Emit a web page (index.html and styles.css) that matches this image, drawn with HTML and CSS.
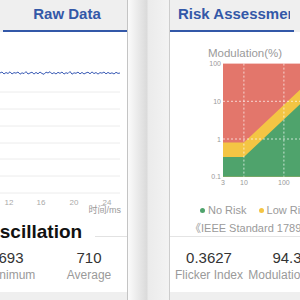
FILE: index.html
```html
<!DOCTYPE html>
<html lang="en">
<head>
  <meta charset="UTF-8" />
  <meta name="viewport" content="width=device-width, initial-scale=1.0" />
  <title>Flicker Report</title>
  <link rel="stylesheet" href="styles.css">
</head>
<body>
  <div class="deck">

    <!-- raw data card -->
    <section class="card card-wave">
      <nav class="tabs">
        <div class="tab"><span>Flicker Waveform</span></div>
        <div class="tab active"><span>Raw Data</span></div>
      </nav>

      <svg class="wave-chart" width="248" height="188" viewBox="0 0 248 188">
        <g class="grid">
          <line x1="30" y1="60" x2="241" y2="60" />
          <line x1="30" y1="77" x2="241" y2="77" />
          <line x1="30" y1="94" x2="241" y2="94" />
          <line x1="30" y1="111" x2="241" y2="111" />
          <line x1="30" y1="127" x2="241" y2="127" />
          <line x1="30" y1="144" x2="241" y2="144" />
          <line x1="30" y1="161" x2="241" y2="161" />
        </g>
        <polyline class="wave" points="30,41 121,41 123,40 125,42 127,40.5 129,41.5 131,39.8 133,42 135,40.6 137,41.2 139,40 141,42.2 143,40.8 145,41.6 147,39.6 149,42 151,41 153,40.2 155,42.1 157,40.4 159,41.8 161,40 163,41.5 165,42.3 167,40.1 169,41 171,39.7 173,41.9 175,40.6 177,42 179,40.3 181,41.4 183,40 185,42.1 187,40.7 189,41.5 191,39.5 193,42.2 195,40.8 197,41.3 199,40.1 201,41.9 203,40.4 205,42 207,40.9 209,40.2 211,41.8 213,39.9 215,41.6 217,40.5 219,42.1 221,40.6 223,41.2 225,40 227,41.9 229,40.4 231,41.6 233,40.8 235,42 237,40.3 239,41.4 241,41" />
        <g class="ticks">
          <text x="33" y="172.5">0</text>
          <text x="65" y="172.5">4</text>
          <text x="98" y="172.5">8</text>
          <text x="130" y="172.5">12</text>
          <text x="162" y="172.5">16</text>
          <text x="195" y="172.5">20</text>
          <text x="228" y="172.5">24</text>
        </g>
        <text class="axis-name" x="242" y="181">时间/ms</text>
      </svg>

      <div class="section-head">
        <h3>Oscillation</h3>
        <div class="rule"></div>
      </div>

      <div class="stats stats-wave">
        <div class="stat"><b>726</b><span>Maximum</span></div>
        <div class="stat"><b>693</b><span>Minimum</span></div>
        <div class="stat"><b>710</b><span>Average</span></div>
      </div>

      <div class="foot"></div>
    </section>

    <div class="gutter"></div>

    <!-- risk card -->
    <section class="card card-risk">
      <nav class="tabs">
        <div class="tab active"><span>Risk Assessment</span></div>
        <div class="tab"><span>Spectrum</span></div>
      </nav>

      <div class="risk-top">
        <svg class="risk-chart" width="248" height="165" viewBox="0 0 248 165">
          <text class="chart-title" x="38" y="24.5">Modulation(%)</text>
          <rect class="zone-high" x="53" y="31.6" width="120" height="113.1" />
          <polygon class="zone-low" points="53,110.6 73.9,110.6 157.8,31.6 173,31.6 173,144.7 53,144.7" />
          <polygon class="zone-none" points="53,125 73.9,125 173,31.6 173,144.7 53,144.7" />
          <g class="dash">
            <line x1="73.9" y1="31.6" x2="73.9" y2="144.7" />
            <line x1="113.9" y1="31.6" x2="113.9" y2="144.7" />
            <line x1="153.9" y1="31.6" x2="153.9" y2="144.7" />
            <line x1="53" y1="69.3" x2="173" y2="69.3" />
            <line x1="53" y1="107" x2="173" y2="107" />
          </g>
          <g class="y-ticks">
            <text x="51" y="34">100</text>
            <text x="51" y="71.8">10</text>
            <text x="51" y="109.5">1</text>
            <text x="51" y="147.2">0.1</text>
          </g>
          <g class="x-ticks">
            <text x="53" y="152.5">3</text>
            <text x="73.9" y="152.5">10</text>
            <text x="113.9" y="152.5">100</text>
            <text x="153.9" y="152.5">1000</text>
          </g>
        </svg>

        <div class="legend">
          <span class="key"><i class="dot dot-none"></i>No Risk</span>
          <span class="key"><i class="dot dot-low"></i>Low Risk</span>
          <span class="key"><i class="dot dot-high"></i>High Risk</span>
        </div>
        <p class="standard">《IEEE Standard 1789-2015》</p>
      </div>

      <div class="stats stats-risk">
        <div class="stat"><b>0.3627</b><span>Flicker Index</span></div>
        <div class="stat"><b>94.3</b><span>Modulation(%)</span></div>
        <div class="stat"><b>1.2</b><span>SVM</span></div>
      </div>

      <div class="foot"></div>
    </section>

  </div>
</body>
</html>
```

FILE: styles.css
```css
:root {
  --blue: #3358a8;
  --tab-bg: #efefef;
  --muted: #9a9a9a;
  --text: #333;
  --red: #e3766b;
  --yellow: #f4c544;
  --green: #4fa36c;
}

* {
  box-sizing: border-box;
}

body {
  margin: 0;
  width: 300px;
  height: 300px;
  overflow: hidden;
  background: #fff;
  font-family: "Liberation Sans", Arial, "Noto Sans CJK SC", sans-serif;
  color: var(--text);
}

.deck {
  display: flex;
  height: 300px;
  margin-left: -121px;
}

.card {
  flex: none;
  display: flex;
  flex-direction: column;
  background: #fff;
}

.card-wave {
  width: 249px;
  border-right: 1px solid #c4c4c4;
}

.card-risk {
  width: 249px;
  border-left: 1px solid #cdcdcd;
}

.gutter {
  flex: none;
  width: 41px;
  background: linear-gradient(to right, #fbfbfb 0, #dadada 19px, #ebebeb 20px, #f3f3f3 100%);
}

/* tabs */

.tabs {
  display: flex;
  height: 32px;
  background: var(--tab-bg);
}

.tab {
  flex: none;
  width: 124px;
  height: 32px;
  padding: 0 4px 0 8px;
  border-bottom: 2px solid transparent;
  font-size: 15px;
  font-weight: 700;
  line-height: 27px;
  color: #a8a8a8;
  text-align: center;
}

.tab span {
  display: block;
  overflow: hidden;
  white-space: nowrap;
}

.tab.active {
  color: var(--blue);
  border-bottom-color: var(--blue);
}

/* raw data chart */

.wave-chart {
  display: block;
  flex: none;
}

.grid line {
  stroke: #ececec;
  stroke-width: 1;
}

.wave {
  fill: none;
  stroke: #3a5bb5;
  stroke-width: 1;
}

.ticks text {
  font-size: 8px;
  fill: #aaa;
  text-anchor: middle;
}

.axis-name {
  font-size: 9px;
  fill: #999;
  text-anchor: end;
  font-family: "Liberation Sans", "Noto Sans CJK SC", sans-serif;
}

.section-head {
  display: flex;
  align-items: flex-start;
}

.section-head h3 {
  margin: 0 0 0 106px;
  padding-right: 13px;
  font-size: 19px;
  line-height: 24px;
  font-weight: 700;
  color: #111;
}

.rule {
  flex: 1;
  height: 1px;
  margin-top: 16px;
  background: #e2e2e2;
}

/* stats */

.stats {
  display: grid;
  grid-template-columns: repeat(3, 78px);
}

.stats-wave {
  justify-content: end;
  margin-right: -1px;
  padding-top: 5px;
}

.stats-risk {
  padding-top: 12px;
}

.stat {
  text-align: center;
  white-space: nowrap;
}

.stat b {
  display: block;
  font-weight: 400;
  font-size: 15px;
  line-height: 18px;
  color: var(--text);
}

.stat span {
  display: block;
  margin-top: 1px;
  font-size: 12px;
  line-height: 15px;
  color: var(--muted);
}

.foot {
  margin-top: auto;
  height: 8px;
  background: var(--tab-bg);
}

/* risk chart */

.risk-top {
  padding-bottom: 1px;
  border-bottom: 1px solid #e4e4e4;
}

.risk-chart {
  display: block;
}

.chart-title {
  font-size: 11.5px;
  fill: var(--muted);
}

.zone-high { fill: var(--red); }
.zone-low { fill: var(--yellow); }
.zone-none { fill: var(--green); }

.dash line {
  stroke: rgba(255, 255, 255, 0.7);
  stroke-width: 1;
  stroke-dasharray: 2 2;
}

.y-ticks text,
.x-ticks text {
  font-size: 7px;
  fill: #999;
}

.y-ticks text {
  text-anchor: end;
}

.x-ticks text {
  text-anchor: middle;
}

.legend {
  display: flex;
  gap: 12px;
  margin-top: 6px;
  padding-left: 30px;
  font-size: 11px;
  line-height: 14px;
  color: var(--muted);
  white-space: nowrap;
}

.key {
  display: flex;
  align-items: center;
  gap: 3px;
}

.dot {
  width: 5px;
  height: 5px;
  border-radius: 50%;
}

.dot-none { background: var(--green); }
.dot-low { background: var(--yellow); }
.dot-high { background: var(--red); }

.standard {
  margin: 4px 0 0;
  padding-left: 20px;
  font-size: 11px;
  line-height: 14px;
  color: var(--muted);
  white-space: nowrap;
}
```
